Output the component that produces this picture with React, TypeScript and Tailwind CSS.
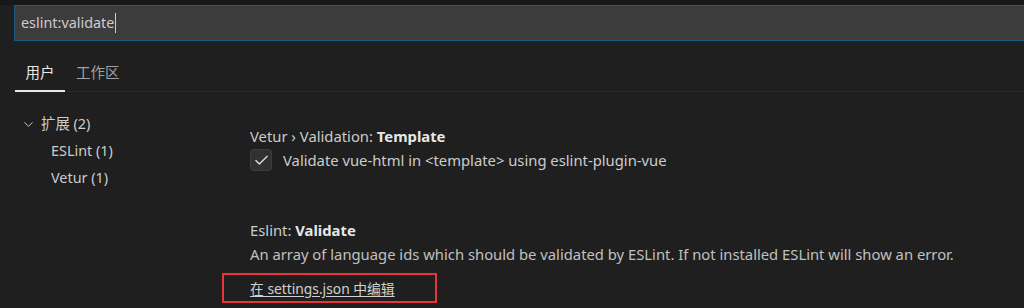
import { ChevronDown, Check } from "lucide-react";

const font = { fontFamily: '"Noto Sans", "Noto Sans CJK SC", sans-serif' };

export default function App() {
  return (
    <div className="w-[1024px] h-[308px] overflow-hidden bg-[#1f1f1f] text-[#cccccc]" style={font}>
      <div className="h-[5px] bg-[#181818]" />
      {/* search */}
      <div className="pl-[14px]">
        <div className="h-[36px] border border-[#1c5a86] border-r-0 bg-[#3c3c3c] flex items-center pl-[6px]">
          <span className="text-[14.4px] text-[#cccccc] leading-none">eslint:validate</span>
          <span className="w-px h-[20px] bg-[#cccccc] ml-px" />
        </div>
      </div>

      {/* tabs */}
      <div className="ml-[15px] mt-[17px] flex border-b border-[#2b2b2b] h-[34px]">
        <div className="w-[50px] flex justify-center pt-[4px] border-b-2 border-[#e7e7e7] -mb-px text-[14.5px] text-[#e7e7e7]">
          用户
        </div>
        <div className="ml-[11px] pt-[4px] text-[14.5px] text-[#a0a0a0]">工作区</div>
      </div>

      <div className="flex">
        {/* tree */}
        <div className="w-[250px] pt-[19px] text-[14.4px]">
          <div className="flex items-center h-[26px] pl-[21px]">
            <ChevronDown size={15} strokeWidth={1.5} className="text-[#cccccc]" />
            <span className="ml-[5px]">扩展 (2)</span>
          </div>
          <div className="h-[27px] flex items-center pl-[51px]">ESLint (1)</div>
          <div className="h-[27px] flex items-center pl-[51px]">Vetur (1)</div>
        </div>

        {/* settings */}
        <div className="flex-1 pt-[34px] text-[14.8px]">
          <div className="leading-[20px]">
            Vetur › Validation: <span className="font-bold text-[#e7e7e7]">Template</span>
          </div>
          <div className="flex items-center mt-[3px]">
            <div className="w-[22px] h-[22px] rounded-[3px] bg-[#313131] border border-[#3c3c3c] flex items-center justify-center">
              <Check size={17} strokeWidth={1.8} className="text-[#e0e0e0]" />
            </div>
            <span className="ml-[11px] leading-[20px]">Validate vue-html in &lt;template&gt; using eslint-plugin-vue</span>
          </div>

          <div className="mt-[49px] leading-[20px]">
            Eslint: <span className="font-bold text-[#e7e7e7]">Validate</span>
          </div>
          <div className="mt-[4px] leading-[20px] text-[#c0c0c0]">
            An array of language ids which should be validated by ESLint. If not installed ESLint will show an error.
          </div>
          <div className="-ml-[28px] mt-[9px] w-[215px] h-[30px] border-2 border-[#e8343a] flex items-center pl-[26px] pt-[2px]">
            <span className="underline underline-offset-2 text-[#d0d0d0] text-[13.8px] leading-[20px]">在 settings.json 中编辑</span>
          </div>
        </div>
      </div>
    </div>
  );
}
